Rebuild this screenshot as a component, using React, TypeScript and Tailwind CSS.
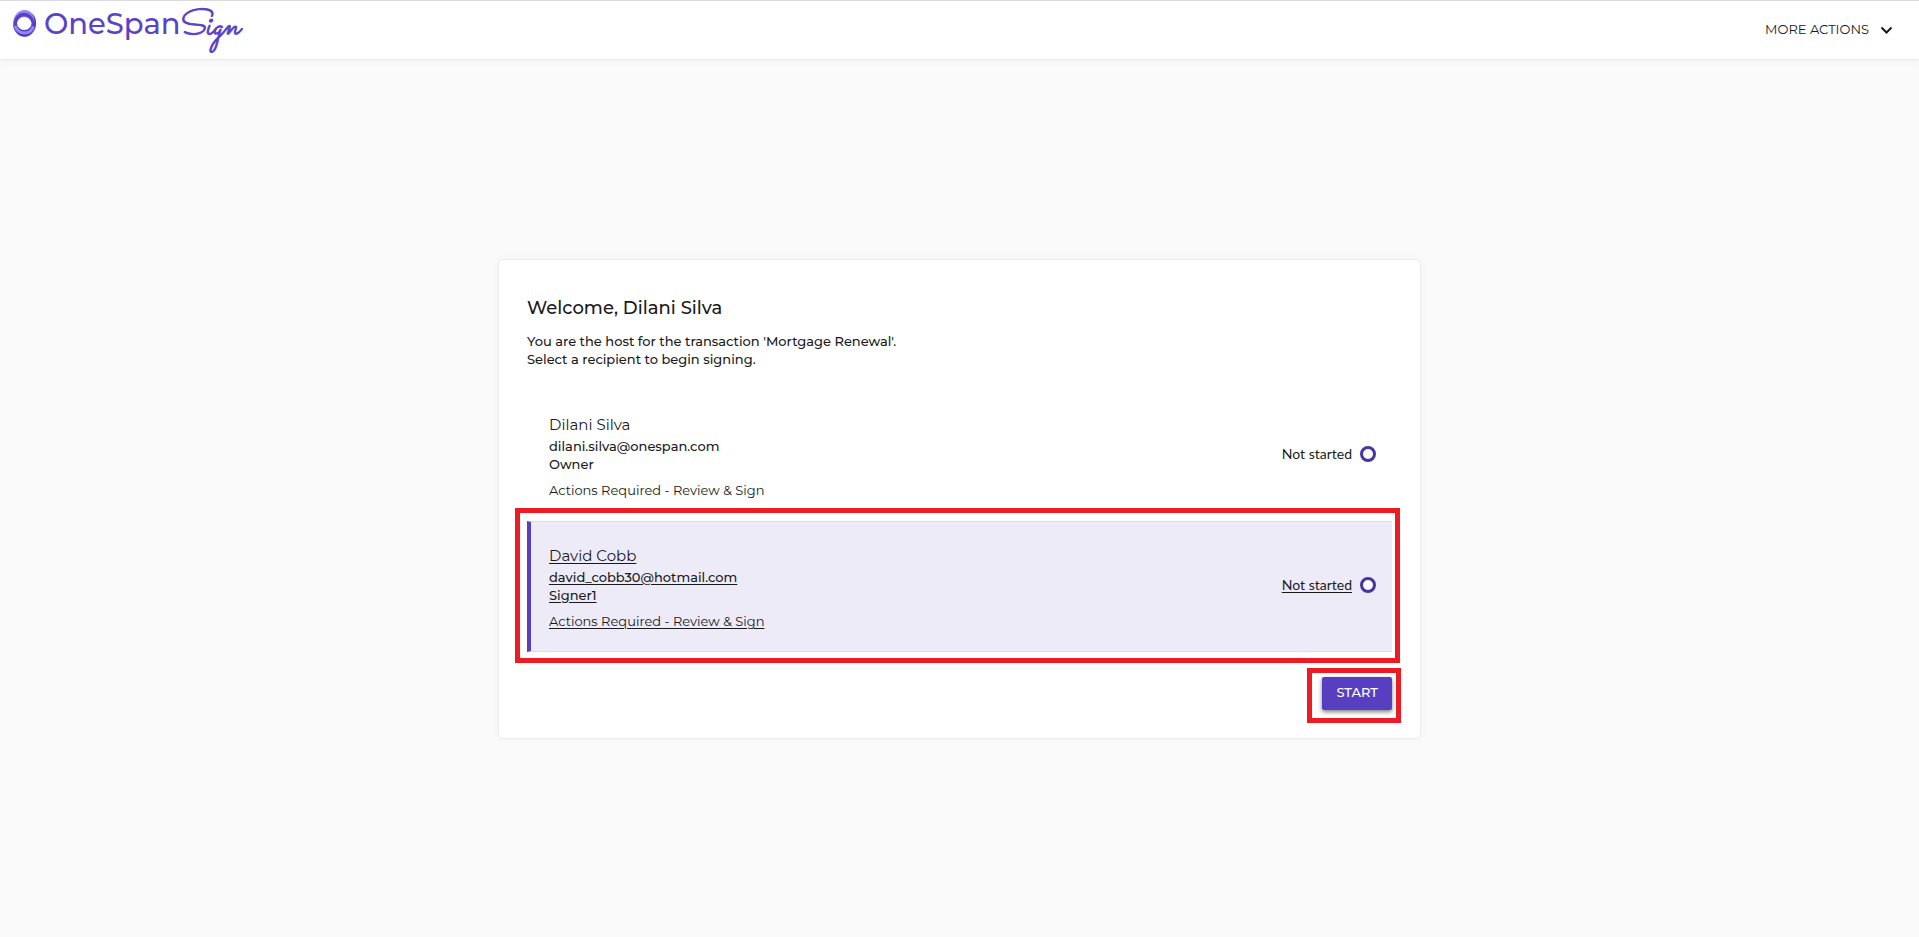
import { useState } from "react"

const recipients = [
  {
    id: "1",
    name: "Dilani Silva",
    email: "dilani.silva@onespan.com",
    role: "Owner",
    action: "Actions Required - Review & Sign",
    status: "Not started",
  },
  {
    id: "2",
    name: "David Cobb",
    email: "david_cobb30@hotmail.com",
    role: "Signer1",
    action: "Actions Required - Review & Sign",
    status: "Not started",
  },
]

function Logo() {
  return (
    <a href="#" className="flex items-center text-[#5a43c6]">
      <svg width="240" height="58" viewBox="0 0 240 58" role="img" aria-label="OneSpan Sign">
        {/* ring: light upper crescent, dark lower crescent, white hole */}
        <ellipse cx="12.5" cy="22.5" rx="11.5" ry="13.5" fill="#9087f8" />
        <path d="M1 22a11.500 13.500 0 0 0 23 0C24 18 22.500 14.500 20 12.500c1.500 2 2.300 5 2.300 7.500 0 7-4.500 12-10.300 12S2.500 28 1 22z" fill="#5138b5" />
        <circle cx="12" cy="22" r="8.500" fill="none" stroke="#5a3fc8" strokeWidth="3.500" />
        <path d="M3 25c2 5 5.500 7 9.500 7s7.500-2.500 9-6.500" fill="none" stroke="#9087f8" strokeWidth="3" />
        <ellipse cx="12.300" cy="22.500" rx="7.200" ry="6.500" fill="#fff" />
        <text x="32" y="33" fontSize="29" fontWeight="500" fill="currentColor" className="font-['Montserrat','Lato',sans-serif]">
          OneSpan
        </text>
        <text
          x="165"
          y="33"
          fontSize="35"
          fontStyle="italic"
          fill="currentColor"
          stroke="currentColor"
          strokeWidth="1"
          className="font-['Sacramento','Dancing_Script','Great_Vibes',cursive]"
        >
          Sign
        </text>
      </svg>
    </a>
  )
}

export default function App() {
  const [selected, setSelected] = useState("2")

  return (
    <div className="flex min-h-screen flex-col bg-[#fafafa] font-['Montserrat','Inter',sans-serif] text-[#1a1a1a]">
      <header className="flex h-15 items-center justify-between border-t border-[#d9d9de] border-b border-b-[#ececec] bg-white pr-6 pl-3 shadow-[0_1px_8px_rgba(0,0,0,0.04)]">
        <Logo />
        <button type="button" className="flex items-center gap-2.5 text-[13px]">
          MORE ACTIONS
          <svg width="16" height="14" viewBox="0 0 16 14" fill="none" stroke="currentColor" strokeWidth="2">
            <path d="M2.500 4.500 7.500 9.500l5-5" />
          </svg>
        </button>
      </header>

      <main className="flex flex-1 items-center justify-center">
        <section className="w-full max-w-[923px] rounded border border-[#ebebeb] bg-white p-7 shadow-[0_0_10px_rgba(0,0,0,0.03)]">
          <h1 className="mt-2 text-lg leading-6 font-medium">Welcome, Dilani Silva</h1>
          <p className="mt-3 text-[13px] leading-[18px] font-medium">
            You are the host for the transaction 'Mortgage Renewal'.
            <br />
            Select a recipient to begin signing.
          </p>

          <ul className="mt-[22px]">
            {recipients.map((recipient) => {
              const active = recipient.id === selected
              return (
                <li key={recipient.id} className="relative">
                  <button
                    type="button"
                    aria-pressed={active}
                    onClick={() => setSelected(recipient.id)}
                    className={`flex w-full items-center justify-between border-y border-l-4 pt-[22px] pr-4 pb-[21px] pl-[18px] text-left ${
                      active
                        ? "border-y-[#dedede] border-l-[#583fc2] bg-[#edebf7] underline underline-offset-2"
                        : "border-transparent"
                    }`}
                  >
                    <span className="flex flex-col">
                      <span className="text-[15px] leading-6">{recipient.name}</span>
                      <span className="text-[13px] leading-[18px] font-medium">{recipient.email}</span>
                      <span className="text-[13px] leading-[18px] font-medium">{recipient.role}</span>
                      <span className="mt-2 text-[13px] leading-[18px]">{recipient.action}</span>
                    </span>
                    <span className="flex items-center gap-2 pb-1 font-['Lato',sans-serif] text-sm">
                      {recipient.status}
                      <span className="size-4 rounded-full border-3 border-[#4a35a0] bg-white" />
                    </span>
                  </button>
                  {active && (
                    <span className="pointer-events-none absolute -top-[13px] -right-2 -bottom-[11px] -left-3 border-5 border-[#ed1c24]" />
                  )}
                </li>
              )
            })}
          </ul>

          <div className="mt-[25px] flex justify-end">
            <div className="relative">
              <button
                type="button"
                className="h-[33px] rounded-xs bg-[#583fc2] px-3.5 text-[13px] font-medium text-white shadow-[0_2px_4px_rgba(0,0,0,0.5)]"
              >
                START
              </button>
              <span className="pointer-events-none absolute -top-[9px] -right-[9px] -bottom-[13px] -left-[15px] border-5 border-[#ed1c24]" />
            </div>
          </div>
        </section>
      </main>
    </div>
  )
}
